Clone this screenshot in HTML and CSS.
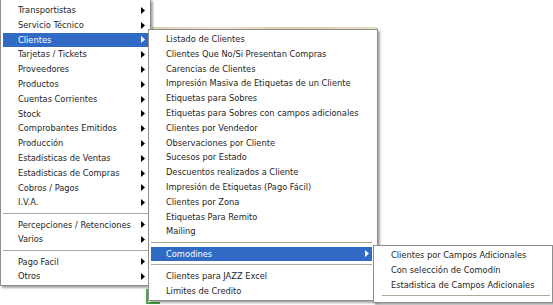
FILE: index.html
```html
<!DOCTYPE html>
<html lang="es">
<head>
<meta charset="utf-8">
<title>Menú Clientes</title>
<link rel="stylesheet" href="styles.css">
</head>
<body>
<div class="desk">
  <div class="backdrop">
    <div class="bg-edge"></div>
    <div class="bg-green"></div>
  </div>

  <ul class="menu menu-main">
    <li class="item has-sub"><span>Transportistas</span><svg class="arrow" viewBox="0 0 4 7"><polygon points="0,0 4,3.5 0,7"/></svg></li>
    <li class="item has-sub"><span>Servicio Técnico</span><svg class="arrow" viewBox="0 0 4 7"><polygon points="0,0 4,3.5 0,7"/></svg></li>
    <li class="item has-sub active"><span>Clientes</span><svg class="arrow" viewBox="0 0 4 7"><polygon points="0,0 4,3.5 0,7"/></svg></li>
    <li class="item has-sub"><span>Tarjetas / Tickets</span><svg class="arrow" viewBox="0 0 4 7"><polygon points="0,0 4,3.5 0,7"/></svg></li>
    <li class="item has-sub"><span>Proveedores</span><svg class="arrow" viewBox="0 0 4 7"><polygon points="0,0 4,3.5 0,7"/></svg></li>
    <li class="item has-sub"><span>Productos</span><svg class="arrow" viewBox="0 0 4 7"><polygon points="0,0 4,3.5 0,7"/></svg></li>
    <li class="item has-sub"><span>Cuentas Corrientes</span><svg class="arrow" viewBox="0 0 4 7"><polygon points="0,0 4,3.5 0,7"/></svg></li>
    <li class="item has-sub"><span>Stock</span><svg class="arrow" viewBox="0 0 4 7"><polygon points="0,0 4,3.5 0,7"/></svg></li>
    <li class="item has-sub"><span>Comprobantes Emitidos</span><svg class="arrow" viewBox="0 0 4 7"><polygon points="0,0 4,3.5 0,7"/></svg></li>
    <li class="item has-sub"><span>Producción</span><svg class="arrow" viewBox="0 0 4 7"><polygon points="0,0 4,3.5 0,7"/></svg></li>
    <li class="item has-sub"><span>Estadísticas de Ventas</span><svg class="arrow" viewBox="0 0 4 7"><polygon points="0,0 4,3.5 0,7"/></svg></li>
    <li class="item has-sub"><span>Estadísticas de Compras</span><svg class="arrow" viewBox="0 0 4 7"><polygon points="0,0 4,3.5 0,7"/></svg></li>
    <li class="item has-sub"><span>Cobros / Pagos</span><svg class="arrow" viewBox="0 0 4 7"><polygon points="0,0 4,3.5 0,7"/></svg></li>
    <li class="item has-sub"><span>I.V.A.</span><svg class="arrow" viewBox="0 0 4 7"><polygon points="0,0 4,3.5 0,7"/></svg></li>
    <li class="sep"></li>
    <li class="item has-sub"><span>Percepciones / Retenciones</span><svg class="arrow" viewBox="0 0 4 7"><polygon points="0,0 4,3.5 0,7"/></svg></li>
    <li class="item has-sub"><span>Varios</span><svg class="arrow" viewBox="0 0 4 7"><polygon points="0,0 4,3.5 0,7"/></svg></li>
    <li class="sep"></li>
    <li class="item has-sub"><span>Pago Facil</span><svg class="arrow" viewBox="0 0 4 7"><polygon points="0,0 4,3.5 0,7"/></svg></li>
    <li class="item has-sub"><span>Otros</span><svg class="arrow" viewBox="0 0 4 7"><polygon points="0,0 4,3.5 0,7"/></svg></li>
  </ul>

  <ul class="menu menu-sub">
    <li class="item"><span>Listado de Clientes</span></li>
    <li class="item"><span>Clientes Que No/Si Presentan Compras</span></li>
    <li class="item"><span>Carencias de Clientes</span></li>
    <li class="item"><span>Impresión Masiva de Etiquetas de un Cliente</span></li>
    <li class="item"><span>Etiquetas para Sobres</span></li>
    <li class="item"><span>Etiquetas para Sobres con campos adicionales</span></li>
    <li class="item"><span>Clientes por Vendedor</span></li>
    <li class="item"><span>Observaciones por Cliente</span></li>
    <li class="item"><span>Sucesos por Estado</span></li>
    <li class="item"><span>Descuentos realizados a Cliente</span></li>
    <li class="item"><span>Impresión de Etiquetas (Pago Fácil)</span></li>
    <li class="item"><span>Clientes por Zona</span></li>
    <li class="item"><span>Etiquetas Para Remito</span></li>
    <li class="item"><span>Mailing</span></li>
    <li class="sep"></li>
    <li class="item has-sub active"><span>Comodines</span><svg class="arrow" viewBox="0 0 4 7"><polygon points="0,0 4,3.5 0,7"/></svg></li>
    <li class="sep"></li>
    <li class="item"><span>Clientes para JAZZ Excel</span></li>
    <li class="item"><span>Limites de Credito</span></li>
  </ul>

  <ul class="menu menu-sub2">
    <li class="item"><span>Clientes por Campos Adicionales</span></li>
    <li class="item"><span>Con selección de Comodín</span></li>
    <li class="item"><span>Estadistica de Campos Adicionales</span></li>
    <li class="sep sep-indent"></li>
  </ul>
</div>
</body>
</html>
```

FILE: styles.css
```css
html, body {
  margin: 0;
  padding: 0;
  background: #ffffff;
}

.desk {
  position: relative;
  width: 553px;
  height: 305px;
  overflow: hidden;
  background: #ffffff;
  font-family: "DejaVu Sans Condensed", "DejaVu Sans", "Liberation Sans", sans-serif;
  font-stretch: condensed;
  font-size: 9.2px;
  color: #1e1e1e;
}

/* background window fragments peeking between the menus */
.backdrop {
  position: absolute;
  inset: 0;
}

.bg-edge {
  position: absolute;
  left: 152px;
  top: 27px;
  width: 226px;
  height: 2px;
  background: linear-gradient(90deg, #d9cfb4, #efe6cf 30%, #d7ccae 60%, #e8dfc6);
}

.bg-green {
  position: absolute;
  left: 146px;
  top: 289px;
  width: 14px;
  height: 15px;
  border-left: 2px solid #4aa84a;
  border-bottom: 2px solid #4aa84a;
  box-sizing: border-box;
}

.menu {
  position: absolute;
  margin: 0;
  padding: 2px;
  list-style: none;
  background: #ffffff;
  border: 1px solid #8e8e8e;
  box-shadow: 2px 2px 2px rgba(0, 0, 0, 0.35);
}

.menu-main {
  left: 0;
  top: -1px;
  width: 145px;
  padding-top: 3px;
  padding-bottom: 1px;
}

.menu-sub {
  left: 148px;
  top: 29px;
  width: 221px;
  padding-right: 5px;
}

.menu-sub2 {
  left: 373px;
  top: 245px;
  width: 174px;
}

.item {
  display: flex;
  align-items: center;
  justify-content: space-between;
  height: 14.8px;
  line-height: 14.8px;
  padding: 0 3px 0 15px;
  white-space: nowrap;
}

.item.active {
  background: #316ac5;
  color: #ffffff;
}

.arrow {
  width: 4px;
  height: 7px;
  fill: #000000;
  flex: none;
}

.item.active .arrow {
  fill: #ffffff;
}

.sep {
  height: 1px;
  margin: 3px 0 3.4px;
  background: #aca899;
}

.sep-indent {
  margin-left: 6px;
}
```
